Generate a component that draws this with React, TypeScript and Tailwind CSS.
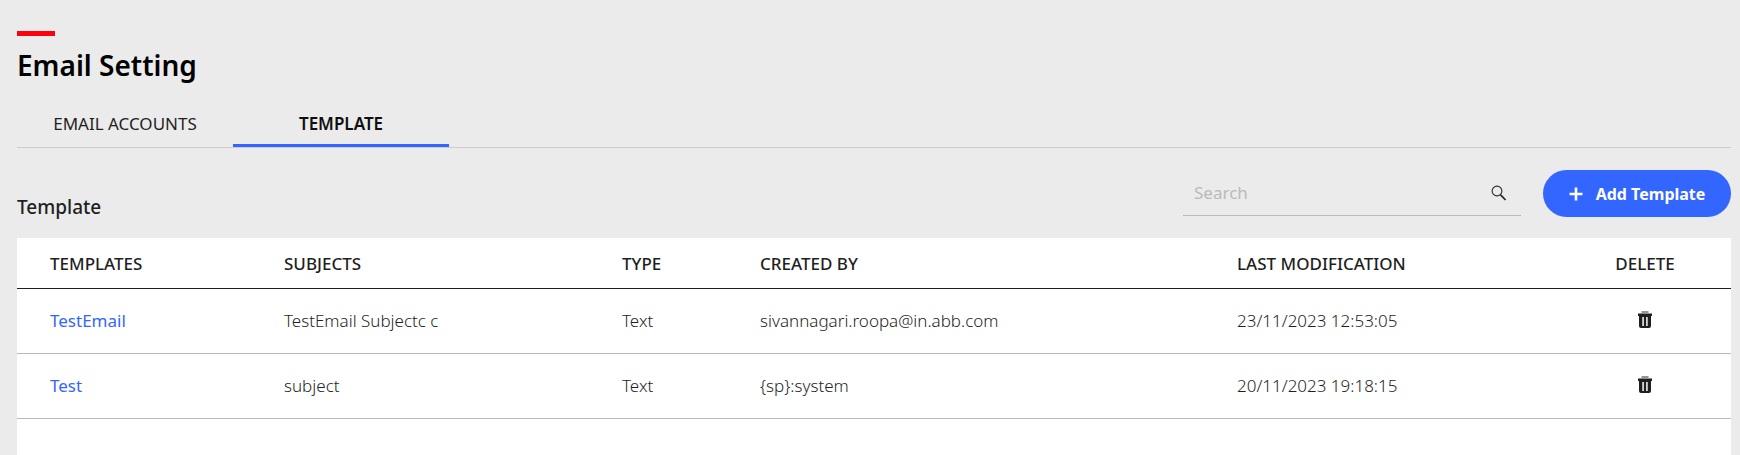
const templates = [
  {
    name: "TestEmail",
    subject: "TestEmail Subjectc c",
    type: "Text",
    createdBy: "sivannagari.roopa@in.abb.com",
    modified: "23/11/2023 12:53:05",
  },
  {
    name: "Test",
    subject: "subject",
    type: "Text",
    createdBy: "{sp}:system",
    modified: "20/11/2023 19:18:15",
  },
];

function SearchIcon() {
  return (
    <svg width="16" height="16" viewBox="0 0 16 16" fill="none" stroke="#2b2b2b" aria-hidden="true">
      <circle cx="6" cy="6" r="4.9" strokeWidth="1.1" />
      <path d="M9.6 9.8 14.6 15" strokeWidth="1.8" />
    </svg>
  );
}

function PlusIcon() {
  return (
    <svg width="14" height="14" viewBox="0 0 14 14" fill="none" stroke="currentColor" aria-hidden="true">
      <path d="M7 0.5v13M0.5 7h13" strokeWidth="2.6" />
    </svg>
  );
}

function TrashIcon() {
  return (
    <svg width="14" height="17" viewBox="0 0 14 17" aria-hidden="true">
      <rect x="3.5" y="0" width="7" height="2" fill="#969696" />
      <path d="M0 2.6h14V5h-1v10a2 2 0 0 1-2 2H3a2 2 0 0 1-2-2V5H0z" fill="#1f1f1f" />
      <path d="M4.2 6h1.8v9H4.2zM8 6h1.8v9H8z" fill="#d6d6d6" />
    </svg>
  );
}

export default function App() {
  return (
    <div className="flex min-h-screen flex-col bg-[#ebebeb] pt-[31px] pr-[9px] pl-[17px] font-['Noto_Sans','Open_Sans',sans-serif] text-[17px] leading-6 text-[#1f1f1f]">
      <header>
        <div className="h-[5px] w-[38px] bg-[#ff000f]" />
        <h1 className="mt-[11px] text-[28px] leading-9 font-semibold text-black">Email Setting</h1>
      </header>

      <nav className="mt-[17px] flex border-b border-[#cccccc]" aria-label="Email settings">
        <a href="#accounts" className="flex h-[47px] w-[216px] items-center justify-center border-b-3 border-transparent pt-1">
          EMAIL ACCOUNTS
        </a>
        <a
          href="#template"
          aria-current="page"
          className="flex h-[47px] w-[216px] items-center justify-center border-b-3 border-[#3366ff] pt-1 font-semibold text-[#0f0f0f]"
        >
          TEMPLATE
        </a>
      </nav>

      <main className="flex grow flex-col">
        <div className="flex items-end justify-between pt-[22px] pb-[21px]">
          <h2 className="text-[19px] leading-5 font-medium">Template</h2>
          <div className="flex items-start gap-[22px]">
            <div className="flex h-[46px] w-[338px] items-center border-b border-[#bababa] pr-[14px] pl-[11px]">
              <input
                type="text"
                aria-label="Search"
                placeholder="Search"
                className="min-w-0 grow bg-transparent outline-none placeholder:text-[#bababa]"
              />
              <button type="button" aria-label="Run search">
                <SearchIcon />
              </button>
            </div>
            <button
              type="button"
              className="flex h-[47px] w-[188px] items-center justify-center gap-[13px] rounded-full bg-[#3366ff] text-base font-bold whitespace-nowrap text-white"
            >
              <PlusIcon />
              Add Template
            </button>
          </div>
        </div>

        <div className="grow bg-white">
          <table className="w-full table-fixed border-collapse text-left">
            <colgroup>
              <col className="w-[234px]" />
              <col className="w-[338px]" />
              <col className="w-[138px]" />
              <col className="w-[477px]" />
              <col className="w-[355px]" />
              <col className="w-[172px]" />
            </colgroup>
            <thead>
              <tr className="h-[50px] border-b border-[#1f1f1f]">
                <th className="pt-0.5 pl-[33px] font-medium">TEMPLATES</th>
                <th className="pt-0.5 pl-[33px] font-medium">SUBJECTS</th>
                <th className="pt-0.5 pl-[33px] font-medium">TYPE</th>
                <th className="pt-0.5 pl-[33px] font-medium">CREATED BY</th>
                <th className="pt-0.5 pl-[33px] font-medium">LAST MODIFICATION</th>
                <th className="pt-0.5 text-center font-medium">DELETE</th>
              </tr>
            </thead>
            <tbody className="font-light">
              {templates.map((t) => (
                <tr key={t.name} className="h-[65px] border-b border-[#bababa]">
                  <td className="pl-[33px]">
                    <a href="#edit" className="font-normal text-[#3366ff]">
                      {t.name}
                    </a>
                  </td>
                  <td className="pl-[33px]">{t.subject}</td>
                  <td className="pl-[33px]">{t.type}</td>
                  <td className="pl-[33px]">{t.createdBy}</td>
                  <td className="pl-[33px]">{t.modified}</td>
                  <td className="text-center">
                    <button type="button" aria-label={`Delete ${t.name}`} className="pb-1 align-middle">
                      <TrashIcon />
                    </button>
                  </td>
                </tr>
              ))}
            </tbody>
          </table>
        </div>
      </main>
    </div>
  );
}
